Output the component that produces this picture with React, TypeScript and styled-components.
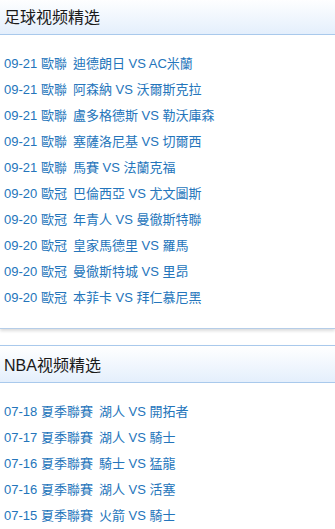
import React from 'react'
import styled, { createGlobalStyle } from 'styled-components'

const GlobalStyle = createGlobalStyle`
    html, body {
        margin: 0;
        padding: 0;
        background: #fff;
        font-family: "Liberation Sans", "Noto Sans CJK TC", sans-serif;
    }
`

const Page = styled.div`
    display: flex;
    flex-direction: column;
    gap: 16px;
    margin-top: -3px;
`

const Section = styled.section`
    background: #fff;
    border-bottom: 1px solid #b5cde8;
    box-shadow: 0 2px 3px rgba(0, 0, 0, 0.14);
`

const Header = styled.div`
    box-sizing: border-box;
    height: 38px;
    display: flex;
    align-items: center;
    padding: 0 4px;
    border-top: 1px solid #a9c9ec;
    border-bottom: 1px solid #a9c9ec;
    background: linear-gradient(#ffffff, #e4effc);
    font-family: "Liberation Sans", "Noto Sans CJK SC", sans-serif;
    font-size: 16px;
    color: #1a1a1a;
`

const List = styled.ul`
    list-style: none;
    margin: 0;
    padding: 16px 0 ${(p: { bottom: number }) => p.bottom}px 4px;
`

const Row = styled.li`
    height: 26px;
    line-height: 26px;
    font-size: 13px;
    color: #2475bb;
    white-space: nowrap;
`

const Match = styled.span`
    margin-left: 6px;
`

interface Item {
    date: string
    league: string
    match: string
}

const football: Item[] = [
    { date: '09-21', league: '歐聯', match: '迪德朗日 VS AC米蘭' },
    { date: '09-21', league: '歐聯', match: '阿森納 VS 沃爾斯克拉' },
    { date: '09-21', league: '歐聯', match: '盧多格德斯 VS 勒沃庫森' },
    { date: '09-21', league: '歐聯', match: '塞薩洛尼基 VS 切爾西' },
    { date: '09-21', league: '歐聯', match: '馬賽 VS 法蘭克福' },
    { date: '09-20', league: '歐冠', match: '巴倫西亞 VS 尤文圖斯' },
    { date: '09-20', league: '歐冠', match: '年青人 VS 曼徹斯特聯' },
    { date: '09-20', league: '歐冠', match: '皇家馬德里 VS 羅馬' },
    { date: '09-20', league: '歐冠', match: '曼徹斯特城 VS 里昂' },
    { date: '09-20', league: '歐冠', match: '本菲卡 VS 拜仁慕尼黑' },
]

const nba: Item[] = [
    { date: '07-18', league: '夏季聯賽', match: '湖人 VS 開拓者' },
    { date: '07-17', league: '夏季聯賽', match: '湖人 VS 騎士' },
    { date: '07-16', league: '夏季聯賽', match: '騎士 VS 猛龍' },
    { date: '07-16', league: '夏季聯賽', match: '湖人 VS 活塞' },
    { date: '07-15', league: '夏季聯賽', match: '火箭 VS 騎士' },
]

const VideoBlock = ({ title, items }: { title: string; items: Item[] }) => (
    <Section>
        <Header>{title}</Header>
        <List bottom={17}>
            {items.map((item, index) => (
                <Row key={index}>
                    {item.date} {item.league}
                    <Match>{item.match}</Match>
                </Row>
            ))}
        </List>
    </Section>
)

const App = () => (
    <>
        <GlobalStyle />
        <Page>
            <VideoBlock title="足球视频精选" items={football} />
            <VideoBlock title="NBA视频精选" items={nba} />
        </Page>
    </>
)

export default App
